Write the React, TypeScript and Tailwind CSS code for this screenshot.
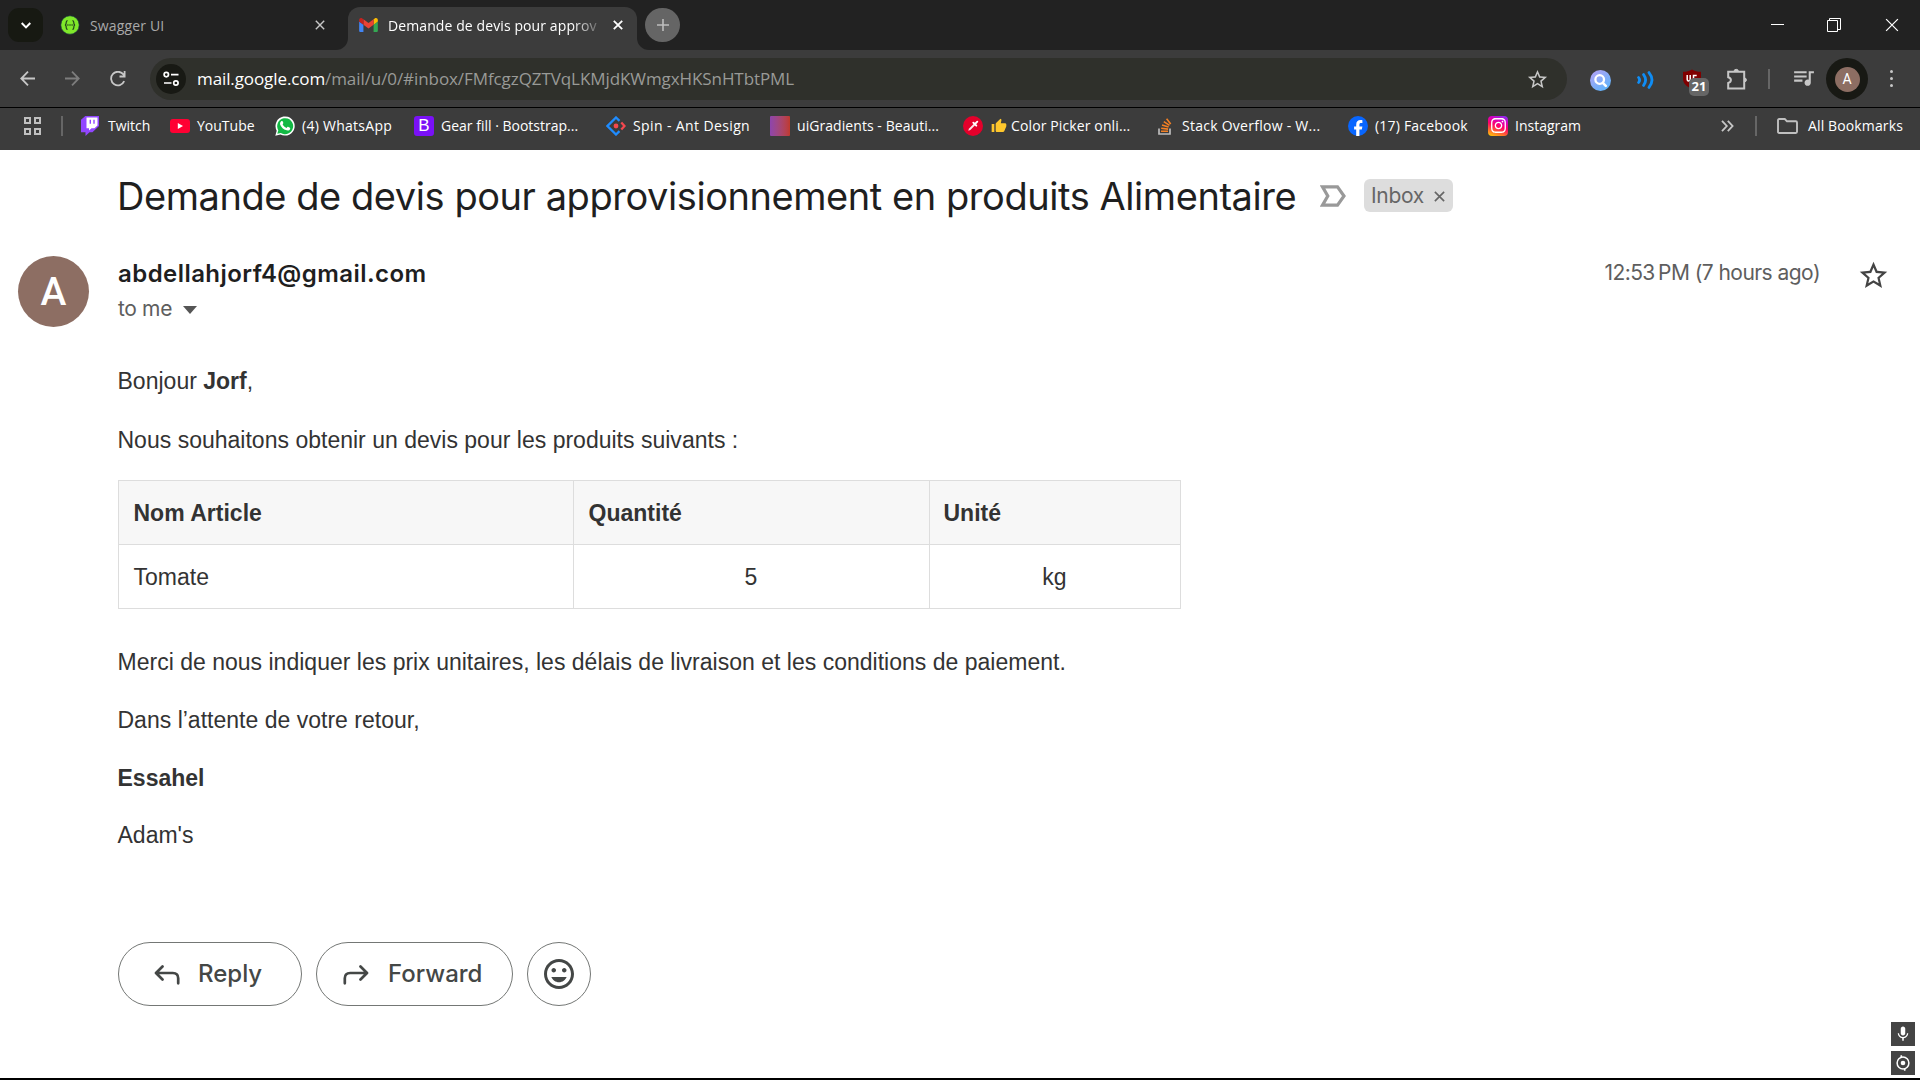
import type { ReactNode } from "react";
import { FaInstagram } from "react-icons/fa";
import { MdMic, MdOutlineMood, MdStarOutline, MdStarBorder, MdQueueMusic, MdThumbUp } from "react-icons/md";

function CloseX({ className }: { className: string }) {
  return (
    <svg viewBox="0 0 10 10" className={className} fill="none" stroke="currentColor">
      <path d="M0.8 0.8 9.2 9.2M9.2 0.8 0.8 9.2" />
    </svg>
  );
}

function SwaggerIcon() {
  return (
    <svg viewBox="0 0 20 20" className="h-5 w-5 shrink-0">
      <circle cx="10" cy="10" r="9.2" fill="#7fe82a" stroke="#173647" strokeWidth="0.6" />
      <g fill="none" stroke="#22421c" strokeWidth="1.2">
        <path d="M7.6 5.6C6.2 5.6 6.2 6.4 6.2 7.6S6 10 4.9 10c1.1 0 1.3 1.2 1.3 2.4s0 2 1.4 2" />
        <path d="M12.4 5.6c1.4 0 1.4.8 1.4 2s.2 2.4 1.3 2.4c-1.1 0-1.3 1.2-1.3 2.4s0 2-1.4 2" />
      </g>
      <g fill="#22421c">
        <circle cx="7.9" cy="10" r="0.8" />
        <circle cx="10" cy="10" r="0.8" />
        <circle cx="12.1" cy="10" r="0.8" />
      </g>
    </svg>
  );
}

function GmailIcon() {
  return (
    <svg viewBox="52 42 88 66" className="h-[14px] w-[19px] shrink-0">
      <path fill="#4285f4" d="M58 108h14V74L52 59v43c0 3.32 2.69 6 6 6" />
      <path fill="#34a853" d="M120 108h14c3.32 0 6-2.69 6-6V59l-20 15" />
      <path fill="#fbbc04" d="M120 48v26l20-15v-8c0-7.42-8.47-11.65-14.4-7.2" />
      <path fill="#ea4335" d="M72 74V48l24 18 24-18v26L96 92" />
      <path fill="#c5221f" d="M52 51v8l20 15V48l-5.6-4.2c-5.94-4.45-14.4-.22-14.4 7.2" />
    </svg>
  );
}

function TabStrip() {
  return (
    <div className="flex h-[50px] bg-[#222222] text-[14px]">
      <div className="ml-2 mt-2 flex h-[34px] w-[35px] items-center justify-center rounded-[11px] bg-[#171912]">
        <svg viewBox="0 0 10 7" className="h-[7px] w-[10px]" fill="none" stroke="#fff" strokeWidth="2">
          <path d="M0.7 1 5 5.4 9.3 1" />
        </svg>
      </div>
      <div className="ml-[17px] flex w-[276px] items-center">
        <SwaggerIcon />
        <span className="ml-[10px] whitespace-nowrap tracking-[0.15px] text-[#a9a9a9]">Swagger UI</span>
        <CloseX className="ml-auto mr-[11px] h-[10px] w-[10px] stroke-[1.4] text-[#c7c7c7]" />
      </div>
      <div className="h-3 w-3 self-end bg-[#3c3c3c]">
        <div className="h-3 w-3 rounded-br-[12px] bg-[#222222]" />
      </div>
      <div className="mt-[7px] flex w-[289px] items-center rounded-t-[12px] bg-[#3c3c3c] pb-[7px] pl-[11px]">
        <GmailIcon />
        <span className="ml-[10px] w-[209px] overflow-hidden whitespace-nowrap tracking-[0.1px] text-white [mask-image:linear-gradient(to_right,#000_88%,rgba(0,0,0,0.25))]">
          Demande de devis pour approv
        </span>
        <CloseX className="ml-4 h-[10px] w-[10px] stroke-[1.8] text-white" />
      </div>
      <div className="h-3 w-3 self-end bg-[#3c3c3c]">
        <div className="h-3 w-3 rounded-bl-[12px] bg-[#222222]" />
      </div>
      <div className="-ml-[4px] mt-2 flex h-[34px] w-[35px] items-center justify-center rounded-full bg-[#656565]">
        <svg viewBox="0 0 12 12" className="h-3 w-3" stroke="#bdbdbd" strokeWidth="1.6">
          <path d="M6 0v12M0 6h12" />
        </svg>
      </div>
      <div className="ml-auto flex items-center pr-[21px]">
        <div className="mb-[2px] h-px w-[13px] bg-white" />
        <svg viewBox="0 0 14 14" className="ml-[43px] h-[14px] w-[14px]" fill="none" stroke="#fff">
          <path d="M0.5 2.5h10v11h-10zM2.5 2.5v-2h11v11h-3" />
        </svg>
        <CloseX className="ml-11 h-[14px] w-[14px] stroke-[0.9] text-white" />
      </div>
    </div>
  );
}

function UblockIcon() {
  return (
    <div className="relative ml-[27px] h-5 w-5">
      <svg viewBox="0 0 20 20" className="h-5 w-5">
        <path d="M10 0.5c2.6 1.8 5.5 2.3 9 2.3v7c0 4.8-3.7 8-9 9.9C4.7 17.8 1 14.6 1 9.800v-7c3.5 0 6.4-.5 9-2.3z" fill="#800000" />
        <path d="M5.2 6v4.4c0 2 3 2 3 0V6M11.5 11V6.5h3.2" stroke="#fff" strokeWidth="1.5" fill="none" />
      </svg>
      <div className="absolute left-[7px] top-[9px] flex h-[18px] w-5 items-center justify-center rounded-[5px] bg-[#666666] text-[13px] font-bold leading-none text-white">21</div>
    </div>
  );
}

function Toolbar() {
  return (
    <div className="flex h-[57px] items-center bg-[#3c3c3c] text-[#c7c7c7]">
      <svg viewBox="0 0 15 15" className="ml-5 h-[15px] w-[15px]" fill="none" stroke="currentColor" strokeWidth="1.8">
        <path d="M15 7.5H1.5M8 .7 1.3 7.5 8 14.3" />
      </svg>
      <svg viewBox="0 0 15 15" className="ml-[30px] h-[15px] w-[15px]" fill="none" stroke="#7d7d7d" strokeWidth="1.8">
        <path d="M0 7.5h13.5M7 .7l6.700 6.8L7 14.3" />
      </svg>
      <svg viewBox="0 0 16 16" className="ml-[30px] h-4 w-4" fill="none" stroke="currentColor" strokeWidth="1.8">
        <path d="M14.2 10.2A6.800 6.800 0 1 1 13.4 3.5L14.6 5M14.6 0v5.5H9.5" />
      </svg>
      <div className="ml-[24px] mt-[1px] flex h-[42px] w-[1417px] items-center rounded-full bg-[#2f302b] pl-[6px]">
        <div className="flex h-[30px] w-[30px] items-center justify-center rounded-full bg-[#181914]">
          <svg viewBox="0 0 16 16" className="h-4 w-4" fill="none" stroke="#fff" strokeWidth="1.7">
            <circle cx="3.3" cy="3.6" r="2.2" />
            <path d="M8 3.6h7.500M1 12h7.500" />
            <circle cx="12.9" cy="12" r="2.2" />
          </svg>
        </div>
        <span className="ml-[11px] whitespace-nowrap text-[17px] tracking-[-0.1px] text-white">mail.google.com</span>
        <span className="whitespace-nowrap text-[17px] tracking-[-0.08px] text-[#999a97]">/mail/u/0/#inbox/FMfcgzQZTVqLKMjdKWmgxHKSnHTbtPML</span>
        <MdStarOutline className="ml-auto mr-[18px] h-[23px] w-[23px]" />
      </div>
      <svg viewBox="0 0 21 21" className="ml-[23px] mt-[3px] h-[21px] w-[21px]">
        <defs>
          <linearGradient id="lens" x1="0" y1="0" x2="0.7" y2="1">
            <stop offset="0" stopColor="#b9a0f5" />
            <stop offset="1" stopColor="#5fb4fb" />
          </linearGradient>
        </defs>
        <circle cx="10.5" cy="10.5" r="10.5" fill="url(#lens)" />
        <circle cx="9.7" cy="9.5" r="4.3" fill="none" stroke="#fff" strokeWidth="2.3" />
        <path d="m12.8 12.8 3 3" stroke="#fff" strokeWidth="2.6" strokeLinecap="round" />
      </svg>
      <svg viewBox="0 0 18 18" className="ml-[26px] mt-[2px] h-[18px] w-[18px]" fill="none" stroke="#0f8df5" strokeWidth="2.800" strokeLinecap="round">
        <path d="M1.6 6.500q2 2.500 0 5M6.600 3.600q4 5.400 0 10.800M12 1.6q6 7.400 0 14.800" />
      </svg>
      <UblockIcon />
      <svg viewBox="0 0 21 22" className="ml-[25px] h-[22px] w-[21px]" fill="none" stroke="currentColor" strokeWidth="2">
        <path d="M1.2 3.8h16v16.800h-16v-5.600c3.600-1 3.600-4.800 0-5.800z" />
        <path d="M7 3.5a2.200 2.200 0 0 1 4.400 0zM17.5 10v3.800a1.900 1.900 0 0 0 0-3.800z" fill="currentColor" strokeWidth="1" />
      </svg>
      <div className="ml-[20px] h-5 w-[2px] bg-[#666666]" />
      <MdQueueMusic className="mb-[2px] ml-[21px] h-[25px] w-[25px]" />
      <div className="ml-[10px] mt-[1px] flex h-[42px] w-[42px] items-center justify-center rounded-full bg-[#181914]">
        <div className="flex h-[25px] w-[25px] items-center justify-center rounded-full bg-[#8d6e63] font-['Roboto'] text-[14px] text-white">A</div>
      </div>
      <div className="ml-[22px] flex flex-col gap-[4px]">
        <div className="h-[3px] w-[3px] rounded-full bg-[#c7c7c7]" />
        <div className="h-[3px] w-[3px] rounded-full bg-[#c7c7c7]" />
        <div className="h-[3px] w-[3px] rounded-full bg-[#c7c7c7]" />
      </div>
    </div>
  );
}

function Bookmark({ icon, className, children }: { icon: ReactNode; className: string; children: ReactNode }) {
  return (
    <div className={`flex shrink-0 items-center gap-[7px] whitespace-nowrap ${className}`}>
      <div className="flex h-5 w-5 shrink-0 items-center">{icon}</div>
      <span className="flex items-center">{children}</span>
    </div>
  );
}

function BookmarksBar() {
  return (
    <div className="flex h-[43px] items-center border-t border-black bg-[#3c3c3c] pb-[7px] text-[14px] text-white">
      <svg viewBox="0 0 17 18" className="ml-6 h-[18px] w-[17px]" fill="none" stroke="#c0c0c0" strokeWidth="2">
        <path d="M1 1h5v5H1zM11 1h5v5h-5zM1 12h5v5H1zM11 12h5v5h-5z" />
      </svg>
      <div className="ml-[20px] mr-[18px] h-5 w-[2px] bg-[#666666]" />
      <Bookmark
        className="w-[89px]"
        icon={
          <svg viewBox="0 0 18 20" className="h-5 w-[18px]">
            <path d="M4.3 0 0 3.8v12.4h4.5V20l4-3.8h3L18 10V0z" fill="#9146ff" />
            <path d="M5.5 1.4h11v8l-3 2.8h-3L8 14.5v-2.3H5.5z" fill="#fff" />
            <path d="M9.3 3.8v4M13 3.8v4" stroke="#9146ff" strokeWidth="1.4" />
          </svg>
        }
      >
        Twitch
      </Bookmark>
      <Bookmark
        className="w-[105px]"
        icon={
          <svg viewBox="0 0 20 14" className="h-[14px] w-5">
            <rect width="20" height="14" rx="3" fill="#ff0033" />
            <path d="m7.8 4 5.2 3-5.2 3z" fill="#fff" />
          </svg>
        }
      >
        YouTube
      </Bookmark>
      <Bookmark
        className="w-[139px] tracking-[0.27px]"
        icon={
          <svg viewBox="0 0 20 20" className="h-5 w-5">
            <path d="M.3 19.8 1.7 14.7A9.6 9.6 0 1 1 5.4 18.4z" fill="#fff" />
            <path d="M2.3 17.8 3.3 14.3A8 8 0 1 1 5.8 16.9z" fill="#12b944" />
            <path d="M6.2 5.3c.9-.8 1.5-.3 1.9.9.4 1 .2 1.2-.5 2.1.9 1.700 2.1 2.900 4 3.700.8-.9 1-1.500 1.800-1.100 2 .9 2 1 1.700 2-.5 1.300-2.100 1.800-3.500 1.400C8.300 13.300 6.400 11.400 5.200 8.700c-.4-1.300 0-2.600 1-3.400z" fill="#fff" />
          </svg>
        }
      >
        (4) WhatsApp
      </Bookmark>
      <Bookmark
        className="w-[192px]"
        icon={<div className="flex h-5 w-5 items-center justify-center rounded-[3px] bg-[#7a11f7] font-['Liberation_Sans'] text-[17px] leading-none">B</div>}
      >
        Gear fill · Bootstrap...
      </Bookmark>
      <Bookmark
        className="w-[164px] tracking-[0.38px]"
        icon={
          <svg viewBox="0 0 20 20" className="h-5 w-5" fill="none" strokeWidth="2.3">
            <path d="M13.5 4.8 10 1.5 1.5 10l8.5 8.5 3.5-3.3" stroke="#1f8cff" />
            <path d="m15.3 6.5 3.2 3.5-3.2 3.5" stroke="#f5484f" />
            <circle cx="10" cy="10" r="2.4" fill="#f5484f" />
          </svg>
        }
      >
        Spin - Ant Design
      </Bookmark>
      <Bookmark className="w-[193px] tracking-[0.06px]" icon={<div className="h-5 w-5 rounded-[1px] bg-gradient-to-r from-[#8e44ad] to-[#c0392b]" />}>
        uiGradients - Beauti...
      </Bookmark>
      <Bookmark
        className="w-[192px] tracking-[0.12px]"
        icon={
          <svg viewBox="0 0 20 20" className="h-5 w-5">
            <circle cx="10" cy="10" r="10" fill="#e4002b" />
            <path d="m5.300 14.700.6-2 5-5 1.400 1.400-5 5z" fill="#fff" opacity="0.9" />
            <path d="m10.300 6.700 3 3M12 8l2.300-2.300" stroke="#fff" strokeWidth="1.900" strokeLinecap="round" />
          </svg>
        }
      >
        <MdThumbUp className="ml-[1px] mr-[4px] h-4 w-4 text-[#ffc72c]" />
        Color Picker onli...
      </Bookmark>
      <Bookmark
        className="w-[193px] tracking-[0.26px]"
        icon={
          <svg viewBox="0 0 20 20" className="h-5 w-5" fill="none">
            <path d="M4 12.5v5.5h11v-5.5" stroke="#bcbbbb" strokeWidth="1.7" />
            <path d="M6 15.3h7M6.2 12.3l6.9.8M7 9l6.600 2M8.800 5.600l5.700 3.700M11.600 2.700l4.100 5.300" stroke="#f48024" strokeWidth="1.6" />
          </svg>
        }
      >
        Stack Overflow - W...
      </Bookmark>
      <Bookmark
        className="w-[140px] tracking-[0.2px]"
        icon={
          <svg viewBox="0 0 20 20" className="h-5 w-5">
            <circle cx="10" cy="10" r="10" fill="#0866ff" />
            <path d="M8.2 20v-6.600H6.100v-3h2.100V8.800c0-3.200 1.500-4.700 4.500-4.700.6 0 1.200.1 1.700.2v2.800h-1.200c-1.400 0-1.800.6-1.800 1.800v1.500h3l-.6 3h-2.400V20z" fill="#fff" />
          </svg>
        }
      >
        (17) Facebook
      </Bookmark>
      <Bookmark
        className=""
        icon={
          <div className="flex h-5 w-5 items-center justify-center rounded-[4px] bg-[linear-gradient(20deg,#ffd600_0%,#ff6930_25%,#ff0069_50%,#d300c5_75%,#7638fa_100%)]">
            <FaInstagram className="h-[17px] w-[17px]" />
          </div>
        }
      >
        Instagram
      </Bookmark>
      <svg viewBox="0 0 13 12" className="ml-auto h-3 w-[13px]" fill="none" stroke="#c7c7c7" strokeWidth="1.8">
        <path d="m1 .8 4.800 5.200L1 11.200M6.800.8l4.800 5.200-4.800 5.200" />
      </svg>
      <div className="ml-[21px] h-5 w-[2px] bg-[#666666]" />
      <svg viewBox="0 0 21 16" className="ml-[20px] h-4 w-[21px]" fill="none" stroke="#c0c0c0" strokeWidth="1.9" strokeLinejoin="round">
        <path d="M2.200 1h5.600l2.200 2.300h8.800q1.200 0 1.200 1.200v9.300q0 1.200-1.200 1.200H2.200Q1 15 1 13.800V2.200Q1 1 2.200 1z" />
      </svg>
      <span className="ml-[10px] mr-[17px] whitespace-nowrap tracking-[0.13px]">All Bookmarks</span>
    </div>
  );
}

function Subject() {
  return (
    <div className="flex h-[92px] items-center pb-[1px] pl-[117px]">
      <h1 className="w-[1203px] whitespace-nowrap text-[38px] leading-[48px] tracking-[-0.44px] text-[#1f1f1f]">
        Demande de devis pour approvisionnement en produits Alimentaire
      </h1>
      <svg viewBox="0 0 26 22" className="h-[22px] w-[26px]" fill="none" stroke="#999999" strokeWidth="3.2">
        <path d="M2.5 1.8h15L24 11l-6.500 9.200h-15L7.800 11z" />
      </svg>
      <div className="ml-[18px] flex h-[33px] w-[89px] items-center rounded-[6px] bg-[#dddddd] pb-[1px] pl-[7px] text-[21px] leading-none tracking-[-0.3px] text-[#666666]">
        <span>Inbox</span>
        <CloseX className="ml-[10px] mt-[3px] h-[11px] w-[11px] stroke-[1.5]" />
      </div>
    </div>
  );
}

function SenderRow() {
  return (
    <div className="flex h-[110px] pl-[18px] pt-[14px]">
      <div className="flex h-[71px] w-[71px] shrink-0 items-center justify-center rounded-full bg-[#8d6e63] font-['Roboto'] text-[39px] font-medium leading-none text-white">
        <span className="mt-[2px]">A</span>
      </div>
      <div className="ml-[29px] pt-[3px]">
        <div className="h-[30px] whitespace-nowrap text-[24px] font-semibold leading-[30px] tracking-[0.44px] text-[#1f1f1f]">abdellahjorf4@gmail.com</div>
        <div className="mt-[6px] flex h-[28px] items-center text-[21px] tracking-[-0.35px] text-[#5e5e5e]">
          to me
          <svg viewBox="0 0 14 8" className="ml-[11px] mt-[1px] h-2 w-[14px]">
            <path d="M0 0h14L7 8z" fill="#555555" />
          </svg>
        </div>
      </div>
      <div className="ml-auto whitespace-nowrap pt-[2px] text-[21px] leading-[30px] tracking-[-0.55px] text-[#5e5e5e]">12:53{"\u202f"}PM (7 hours ago)</div>
      <MdStarBorder className="ml-[37px] mr-[30px] mt-[3px] h-[33px] w-[33px] text-[#444444]" />
    </div>
  );
}

function MailBody() {
  return (
    <div className="pl-[117.5px] font-['Liberation_Sans',Arial,sans-serif] text-[23px] leading-[30px] tracking-[0.01px] text-[#333333]">
      <p className="mt-[14px]">
        Bonjour <b>Jorf</b>,
      </p>
      <p className="mt-[29px]">Nous souhaitons obtenir un devis pour les produits suivants :</p>
      <table className="mt-[25px] w-[1063px] table-fixed border-collapse">
        <thead>
          <tr className="h-16 bg-[#f7f7f7] text-left">
            <th className="w-[455px] border border-[#dddddd] px-[15px]">Nom Article</th>
            <th className="w-[356px] border border-[#dddddd] px-[15px]">Quantité</th>
            <th className="border border-[#dddddd] px-[14px]">Unité</th>
          </tr>
        </thead>
        <tbody>
          <tr className="h-16">
            <td className="border border-[#dddddd] px-[15px]">Tomate</td>
            <td className="border border-[#dddddd] px-[15px] text-center">5</td>
            <td className="border border-[#dddddd] px-[15px] text-center">kg</td>
          </tr>
        </tbody>
      </table>
      <p className="mt-[38px]">Merci de nous indiquer les prix unitaires, les délais de livraison et les conditions de paiement.</p>
      <p className="mt-[28px]">Dans l’attente de votre retour,</p>
      <p className="mt-[28px] font-bold">Essahel</p>
      <p className="mt-[27px]">Adam's</p>
    </div>
  );
}

function Actions() {
  return (
    <div className="mt-[92px] flex gap-[14px] pl-[118px] text-[24px] font-medium text-[#444746]">
      <div className="flex h-16 w-[184px] items-center rounded-full border border-[#747775] pl-[35px]">
        <svg viewBox="0 0 26 20" className="mt-[2px] h-5 w-[26px]" fill="none" stroke="currentColor" strokeWidth="2.7" strokeLinecap="round" strokeLinejoin="round">
          <path d="M8.5 1.500 2 8l6.500 6.500M2.500 8h16.300q5.400 0 5.400 5.300v5" />
        </svg>
        <span className="ml-[18px]">Reply</span>
      </div>
      <div className="flex h-16 w-[197px] items-center rounded-full border border-[#747775] pl-[26px]">
        <svg viewBox="0 0 26 20" className="mt-[2px] h-5 w-[26px]" fill="none" stroke="currentColor" strokeWidth="2.7" strokeLinecap="round" strokeLinejoin="round">
          <path d="M17.5 1.500 24 8l-6.500 6.500M23.500 8H7.200q-5.400 0-5.400 5.300v5" />
        </svg>
        <span className="ml-[19px]">Forward</span>
      </div>
      <div className="flex h-16 w-16 items-center justify-center rounded-full border border-[#747775]">
        <MdOutlineMood className="h-[36px] w-[36px]" />
      </div>
    </div>
  );
}

function SideTools() {
  return (
    <div className="mb-[3px] mr-[5px] flex flex-col gap-[5px] self-end">
      <div className="flex h-6 w-6 items-center justify-center bg-[#444444] text-white">
        <MdMic className="h-[18px] w-[18px]" />
      </div>
      <div className="flex h-6 w-6 items-center justify-center bg-[#444444]">
        <svg viewBox="0 0 16 16" className="h-4 w-4" fill="none" stroke="#fff">
          <circle cx="8" cy="8" r="5.9" strokeWidth="1.5" />
          <circle cx="8" cy="8" r="2.3" fill="#fff" stroke="none" />
          <path d="M6.3.3v2.200M9.700 13.500v2.200" strokeWidth="1.6" />
        </svg>
      </div>
    </div>
  );
}

export default function App() {
  return (
    <div className="flex h-[1080px] w-[1920px] flex-col overflow-hidden bg-white font-['Open_Sans',sans-serif]">
      <TabStrip />
      <Toolbar />
      <BookmarksBar />
      <main className="flex min-h-0 flex-1 border-b-2 border-black font-['Inter',sans-serif]">
        <div className="w-[1891px] shrink-0">
          <div className="w-[1920px]">
            <Subject />
            <SenderRow />
          </div>
          <MailBody />
          <Actions />
        </div>
        <SideTools />
      </main>
    </div>
  );
}
